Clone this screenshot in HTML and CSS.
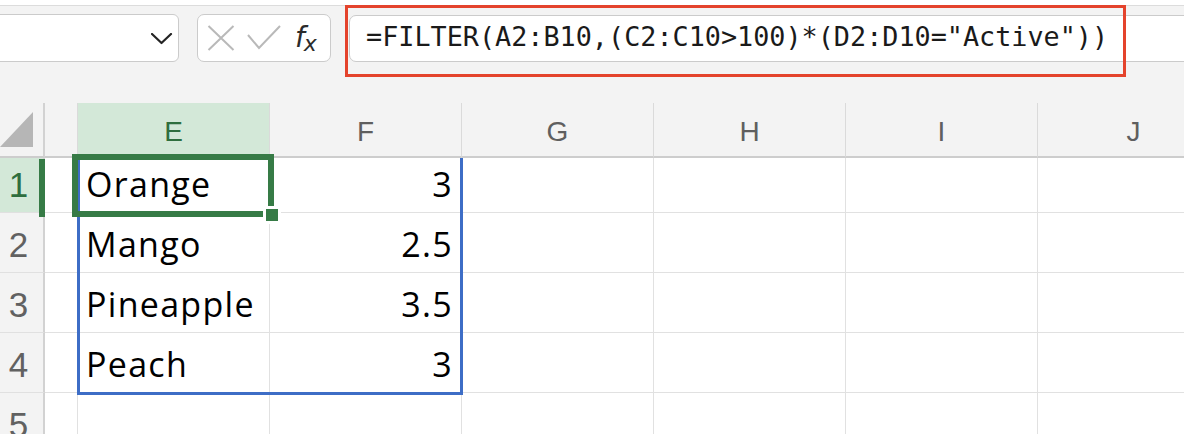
FILE: index.html
```html
<!DOCTYPE html>
<html>
<head>
<meta charset="utf-8">
<link rel="stylesheet" href="styles.css">
</head>
<body>
<div class="app">
  <div class="topstrip"></div>
  <div class="toolbar">
    <div class="namebox">
      <svg class="chev" width="22" height="12" viewBox="0 0 22 12"><polyline points="1,1 10.5,10 20,1" fill="none" stroke="#242424" stroke-width="2.2" stroke-linecap="round" stroke-linejoin="round"/></svg>
    </div>
    <div class="fxbox">
      <svg class="ico" width="28" height="26" viewBox="0 0 28 26"><path d="M1.5 1 L26.5 25 M26.5 1 L1.5 25" stroke="#b9b9b9" stroke-width="2" fill="none"/></svg>
      <svg class="ico" width="34" height="26" viewBox="0 0 34 26"><polyline points="1,10 12,23 33,1" stroke="#b9b9b9" stroke-width="2" fill="none"/></svg>
      <span class="fx"><span class="fx-f">f</span><span class="fx-x">x</span></span>
    </div>
    <div class="formula">=FILTER(A2:B10,(C2:C10&gt;100)*(D2:D10="Active"))</div>
    <div class="annot"></div>
  </div>
  <div class="sheet">
    <div class="grid">
      <div class="corner"><div class="tri"></div></div>
      <div class="colhead"></div>
      <div class="colhead sel-col">E</div>
      <div class="colhead">F</div>
      <div class="colhead">G</div>
      <div class="colhead">H</div>
      <div class="colhead">I</div>
      <div class="colhead">J</div>

      <div class="rowhead sel-row">1</div>
      <div class="cell"></div>
      <div class="cell">Orange</div>
      <div class="cell num">3</div>
      <div class="cell"></div><div class="cell"></div><div class="cell"></div><div class="cell"></div>

      <div class="rowhead">2</div>
      <div class="cell"></div>
      <div class="cell">Mango</div>
      <div class="cell num">2.5</div>
      <div class="cell"></div><div class="cell"></div><div class="cell"></div><div class="cell"></div>

      <div class="rowhead">3</div>
      <div class="cell"></div>
      <div class="cell">Pineapple</div>
      <div class="cell num">3.5</div>
      <div class="cell"></div><div class="cell"></div><div class="cell"></div><div class="cell"></div>

      <div class="rowhead">4</div>
      <div class="cell"></div>
      <div class="cell">Peach</div>
      <div class="cell num">3</div>
      <div class="cell"></div><div class="cell"></div><div class="cell"></div><div class="cell"></div>

      <div class="rowhead">5</div>
      <div class="cell"></div><div class="cell"></div><div class="cell"></div>
      <div class="cell"></div><div class="cell"></div><div class="cell"></div><div class="cell"></div>
    </div>
    <div class="spill"></div>
    <div class="rowbar"></div>
    <div class="selection"></div>
    <div class="handle"></div>
  </div>
</div>
</body>
</html>
```

FILE: styles.css
```css
* { box-sizing: border-box; }
html, body { margin: 0; padding: 0; }
body { width: 1184px; height: 434px; overflow: hidden; background: #fff; font-family: "Open Sans", "Liberation Sans", sans-serif; }

.app { width: 1184px; height: 434px; overflow: hidden; }

.topstrip { height: 6px; background: #fff; border-bottom: 1px solid #dcdcdc; }

.toolbar {
  position: relative;
  height: 97px;
  background: #f3f3f3;
  display: flex;
  align-items: flex-start;
  padding-top: 8px;
  gap: 18px;
}

.namebox {
  margin-left: -12px;
  width: 191px;
  height: 48px;
  background: #fff;
  border: 1.5px solid #cbcbcb;
  border-radius: 6px;
  display: flex;
  align-items: center;
  justify-content: flex-end;
  padding-right: 5px;
}
.chev { display: block; margin-top: 1px; }

.fxbox {
  width: 134px;
  height: 48px;
  background: #fff;
  border: 1.5px solid #cbcbcb;
  border-radius: 7px;
  display: flex;
  align-items: center;
  padding-left: 9px;
  gap: 12px;
}
.ico { display: block; }
.fx { display: flex; align-items: baseline; margin-left: 2px; color: #2b2b2b; font-family: "DejaVu Sans", sans-serif; font-style: italic; }
.fx-f { font-size: 28px; line-height: 1; }
.fx-x { font-size: 22px; line-height: 1; position: relative; top: 4px; margin-left: -1px; }

.formula {
  flex: 1;
  margin-top: 1px;
  height: 47px;
  margin-right: -20px;
  background: #fff;
  border: 1.5px solid #cbcbcb;
  border-radius: 7px;
  padding-left: 16px;
  font-family: "DejaVu Sans Mono", "Liberation Mono", monospace;
  font-size: 26.8px;
  line-height: 42px;
  color: #1a1a1a;
  white-space: nowrap;
}

.annot {
  position: absolute;
  left: 345px;
  top: -1px;
  width: 781px;
  height: 72px;
  border: 3px solid #e4432c;
}

.sheet { position: relative; }

.grid {
  display: grid;
  grid-template-columns: 45px 33px repeat(6, 192px);
  grid-template-rows: 55px 55px 60px 60px 60px 60px;
}

.corner {
  background: #f3f3f3;
  border-right: 2px solid #d2d2d2;
  border-bottom: 2px solid #cdcdcd;
  position: relative;
}
.tri {
  position: absolute;
  left: 0;
  top: 9px;
  width: 33px;
  height: 35px;
  background: #b6b6b6;
  clip-path: polygon(100% 0, 100% 100%, 0 100%);
}

.colhead {
  background: #f3f3f3;
  border-right: 1px solid #dadada;
  border-bottom: 2px solid #cdcdcd;
  display: flex;
  align-items: flex-end;
  justify-content: center;
  padding-bottom: 6px;
  font-family: "Liberation Sans", sans-serif;
  font-size: 28px;
  line-height: 36px;
  color: #5f5f5f;
}
.colhead.sel-col { background: #d3e8d8; color: #2e6e3e; }

.rowhead {
  background: #f3f3f3;
  border-right: 2px solid #d2d2d2;
  border-bottom: 1px solid #e0e0e0;
  display: flex;
  align-items: flex-end;
  justify-content: center;
  padding-right: 6px;
  padding-bottom: 7px;
  font-family: "Liberation Sans", sans-serif;
  font-size: 35px;
  line-height: 40px;
  color: #616161;
}
.rowhead.sel-row { background: #d3e8d8; color: #2e6e3e; }

.cell {
  background: #fff;
  border-right: 1px solid #e1e1e1;
  border-bottom: 1px solid #e1e1e1;
  display: flex;
  align-items: flex-end;
  padding: 0 9px 5px 8px;
  font-size: 34px;
  letter-spacing: 1.3px;
  line-height: 46px;
  color: #000;
  white-space: nowrap;
}
.cell.num { justify-content: flex-end; padding-right: 8px; }

.spill {
  position: absolute;
  left: 77px;
  top: 55px;
  width: 386px;
  height: 237px;
  border: 3px solid #3d6dc6;
  border-top: none;
}

.rowbar {
  position: absolute;
  left: 39px;
  top: 56px;
  width: 6px;
  height: 58px;
  background: #367b46;
}

.selection {
  position: absolute;
  left: 72px;
  top: 51px;
  width: 202px;
  height: 63px;
  border: 6px solid #367b46;
}

.handle {
  position: absolute;
  left: 263px;
  top: 103px;
  width: 18px;
  height: 18px;
  background: #367b46;
  border: 3px solid #fff;
}
```
